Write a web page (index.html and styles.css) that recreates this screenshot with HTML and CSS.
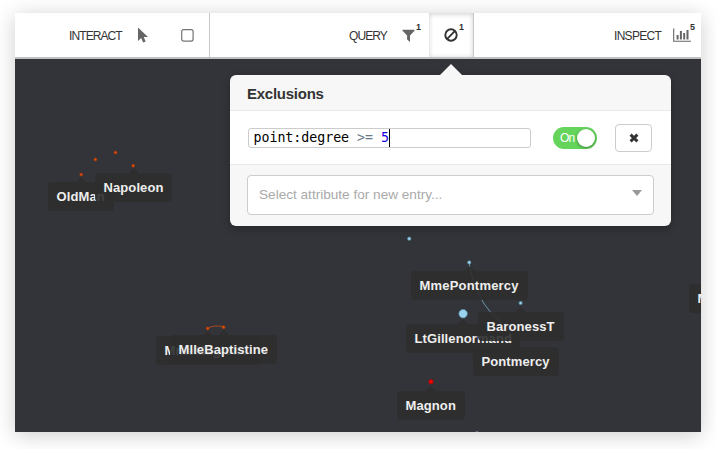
FILE: index.html
```html
<!DOCTYPE html>
<html lang="en">
<head>
<meta charset="utf-8">
<title>Graph exclusions</title>
<link rel="stylesheet" href="styles.css">
</head>
<body>
<main class="window">
  <header class="toolbar">
    <section class="group interact">
      <span class="title">INTERACT</span>
      <svg class="pointer" width="12" height="17" viewBox="0 0 12 17"><path d="M1 .5V14l3.100-2.900 2.100 4.500 2.500-1.100-2-4.400H11z" fill="#666"/></svg>
      <svg class="marquee" width="13" height="13" viewBox="0 0 13 13"><rect x=".7" y=".7" width="11.400" height="11.400" rx="2" fill="#fff" stroke="#747474" stroke-width="1.200"/></svg>
    </section>
    <section class="group query">
      <span class="title">QUERY</span>
      <svg class="funnel" width="13" height="13" viewBox="0 0 13 13"><path d="M.5.7h12v1L8 6.500V13L5.100 10.500v-4L.5 1.700z" fill="#666"/></svg>
      <sup class="count">1</sup>
    </section>
    <section class="group exclude">
      <svg width="14" height="14" viewBox="0 0 14 14"><circle cx="7" cy="7" r="5.700" fill="none" stroke="#333" stroke-width="1.900"/><path d="M3.200 10.800l7.600-7.600" stroke="#333" stroke-width="1.900"/></svg>
      <sup class="count">1</sup>
    </section>
    <section class="group inspect">
      <span class="title">INSPECT</span>
      <svg class="chart" width="18" height="14" viewBox="0 0 18 14"><path d="M.7.500v12.800H18" fill="none" stroke="#666" stroke-width="1.100"/><path d="M3.600 7h2v4.500h-2zM6.900 3h2v8.500h-2zM10.200 5h2v6.500h-2zM13.500 2h2v9.500h-2z" fill="#666"/></svg>
      <sup class="count">5</sup>
    </section>
  </header>

  <div class="graph">
    <svg class="marks" width="686" height="373" viewBox="15 59 686 373">
      <g fill="#e8500b" stroke="#8a3512" stroke-width=".8">
        <circle cx="81.200" cy="174.500" r="1.500"/><circle cx="95.400" cy="159.500" r="1.500"/><circle cx="115.500" cy="152.500" r="1.500"/><circle cx="133.200" cy="165.700" r="1.500"/>
        <circle cx="207.700" cy="328.400" r="1.500"/><circle cx="223.600" cy="327.200" r="1.500"/>
      </g>
      <path d="M208 328q6-3 15-1.500" fill="none" stroke="#b5481c" stroke-width=".9"/>
      <path d="M469 262Q474 301 503 324" fill="none" stroke="#79aec5" stroke-width=".8"/>
      <g fill="#9bd3ee" stroke="#5a93ab" stroke-width=".7">
        <circle cx="409.200" cy="238.700" r="1.600"/><circle cx="469.200" cy="262.400" r="1.600"/><circle cx="520.600" cy="303" r="1.600"/><circle cx="463.100" cy="313.700" r="4.200"/>
      </g>
      <circle cx="431" cy="381.700" r="2.300" fill="#f00" stroke="#850b10" stroke-width=".8"/>
      <circle cx="477" cy="433" r="1.800" fill="#9a80b4"/>
    </svg>
    <div class="node oldman">OldMan</div>
    <div class="node napoleon">Napoleon</div>
    <div class="node magloire">MmeMagloire</div>
    <div class="node baptistine">MlleBaptistine</div>
    <div class="node mme">MmePontmercy</div>
    <div class="node gillenormand">LtGillenormand</div>
    <div class="node pontmercy">Pontmercy</div>
    <div class="node baroness">BaronessT</div>
    <div class="node magnon">Magnon</div>
    <div class="node edge">M</div>
  </div>

  <section class="popover">
    <h2 class="heading">Exclusions</h2>
    <div class="entry">
      <div class="expression"><span>point:degree <span class="operator">&gt;=</span> <span class="number">5</span></span><i class="caret"></i></div>
      <div class="switch"><span>On</span><i class="knob"></i></div>
      <button class="remove" aria-label="Remove"><svg width="10" height="10" viewBox="0 0 10 10"><path d="M1.600 1.600l6.800 6.800M8.400 1.600L1.600 8.400" stroke="#333" stroke-width="2.900"/></svg></button>
    </div>
    <div class="add"><div class="select"><span class="placeholder">Select attribute for new entry...</span><i class="arrow"></i></div></div>
  </section>
</main>
</body>
</html>
```
FILE: styles.css
```css
* { box-sizing: border-box; }

body {
  margin: 0;
  padding: 13px 15px 17px;
  height: 449px;
  overflow: hidden;
  background: #fff;
  font-family: "Liberation Sans", Arial, sans-serif;
}

.window {
  position: relative;
  width: 686px;
  height: 419px;
  background: #333439;
  box-shadow: 0 3px 20px rgba(0, 0, 0, .2);
}

.toolbar {
  display: flex;
  height: 46px;
  background: #fff;
  border-bottom: 2px solid #c0c0c2;
}

.group {
  display: flex;
  align-items: center;
  position: relative;
}

.title {
  padding-top: 1px;
  font-size: 12px;
  line-height: 14px;
  letter-spacing: -.9px;
  color: #333;
}

.interact { width: 195px; padding-left: 54px; border-right: 1px solid #c8c8c8; }
.interact .title { width: 54px; }
.pointer { margin-left: 14px; }
.marquee { margin-left: 32px; }
.query { width: 219px; padding-left: 139px; }
.query .title { width: 38px; }
.funnel { margin-left: 15px; }

.exclude {
  width: 45px;
  padding-left: 15px;
  border-right: 1px solid #c8c8c8;
  box-shadow: inset 0 1px 5px rgba(0, 0, 0, .2);
}

.inspect { width: 227px; padding-left: 140px; }
.inspect .title { width: 48px; letter-spacing: -.7px; }
.chart { margin-left: 11px; }

.count {
  position: absolute;
  top: 9px;
  font-size: 9px;
  font-weight: bold;
  line-height: 10px;
  color: #333;
}

.query .count { left: 206px; }
.exclude .count { left: 30px; }
.inspect .count { left: 216px; }

.graph {
  position: relative;
  height: 373px;
  overflow: hidden;
}

.marks { display: block; }

.node {
  position: absolute;
  height: 29px;
  padding-left: 8.500px;
  border-radius: 4px;
  background: rgba(45, 45, 45, .9);
  color: #eee;
  font-size: 13px;
  font-weight: bold;
  line-height: 29px;
  letter-spacing: .1px;
  white-space: nowrap;
}

.node::before {
  content: "";
  position: absolute;
  left: 50%;
  top: -5px;
  margin-left: -5px;
  border: 5px solid transparent;
  border-top: 0;
  border-bottom-color: rgba(45, 45, 45, .9);
}

.oldman { left: 33px; top: 123px; width: 66px; }
.napoleon { left: 80px; top: 114px; width: 77px; }
.magloire { left: 141px; top: 277px; width: 103px; }
.baptistine { left: 155px; top: 276px; width: 107px; }
.mme { left: 396px; top: 212px; width: 117px; letter-spacing: .2px; }
.gillenormand { left: 391px; top: 265px; width: 114px; }
.pontmercy { left: 458px; top: 288px; width: 86px; }
.baroness { left: 463px; top: 253px; width: 86px; }
.magnon { left: 382px; top: 332px; width: 68px; }
.edge { left: 674px; top: 225px; width: 60px; }

.popover {
  position: absolute;
  left: 215px;
  top: 62px;
  width: 441px;
  height: 151px;
  border-radius: 6px;
  background: #f7f7f7;
  box-shadow: 0 3px 8px rgba(0, 0, 0, .25);
}

.popover::before {
  content: "";
  position: absolute;
  left: 210px;
  top: -11px;
  border: 11px solid transparent;
  border-top: 0;
  border-bottom-color: #f7f7f7;
}

.heading {
  height: 36px;
  margin: 0;
  padding-left: 17px;
  border-bottom: 1px solid #e9e9e9;
  font-size: 15px;
  font-weight: bold;
  line-height: 37px;
  letter-spacing: -.25px;
  color: #333;
}

.entry {
  display: flex;
  align-items: center;
  height: 54px;
  padding-left: 18px;
  background: #fff;
  border-bottom: 1px solid #e9e9e9;
}

.expression {
  display: flex;
  align-items: center;
  width: 283px;
  height: 20px;
  padding-left: 4.500px;
  border: 1px solid #ccc;
  border-radius: 3px;
  font: 13.300px/18px "DejaVu Sans Mono", monospace;
  letter-spacing: -.04px;
  color: #000;
  white-space: pre;
}

.operator { color: #687887; }
.number { color: #1800e0; }
.caret { width: 1px; height: 18px; background: #000; }

.switch {
  display: flex;
  align-items: center;
  justify-content: space-between;
  width: 44px;
  height: 22px;
  margin-left: 22px;
  padding: 0 2px 0 7px;
  border-radius: 11px;
  background: #64d45b;
  color: #fff;
  font-size: 12px;
  letter-spacing: -.8px;
}

.knob {
  width: 18px;
  height: 18px;
  border-radius: 50%;
  background: #fff;
  box-shadow: 0 1px 3px rgba(0, 0, 0, .4);
}

.remove {
  display: flex;
  align-items: center;
  justify-content: center;
  width: 37px;
  height: 28px;
  margin-left: 18px;
  padding: 0;
  border: 1px solid #ccc;
  border-radius: 4px;
  background: #fff;
}

.add { padding: 10px 17px; }

.select {
  display: flex;
  align-items: center;
  justify-content: space-between;
  height: 40px;
  padding: 0 11px;
  border: 1px solid #ccc;
  border-radius: 4px;
  background: #fff;
  color: #aaa;
  font-size: 13.600px;
}

.placeholder { padding-bottom: 1px; }

.arrow {
  margin-top: -5px;
  border: 5.500px solid transparent;
  border-top: 6px solid #999;
  border-bottom: 0;
}
```
